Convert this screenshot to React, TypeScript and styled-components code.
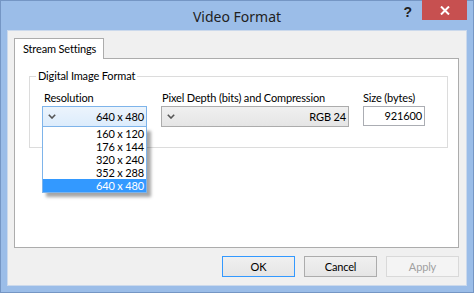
import React from 'react'
import styled, { createGlobalStyle } from 'styled-components'

const GlobalStyle = createGlobalStyle`
  html, body {
    margin: 0;
    padding: 0;
    background: #9bbde8;
  }
  body {
    font-family: Lato, "Liberation Sans", sans-serif;
    font-size: 11px;
    letter-spacing: -0.15px;
    color: #000;
  }
`

const resolutions = ['160 x 120', '176 x 144', '320 x 240', '352 x 288', '640 x 480']
const selected = '640 x 480'

export default function App() {
  return (
    <>
      <GlobalStyle />
      <Window>
        <TitleBar>
          <Title>Video Format</Title>
          <HelpButton>?</HelpButton>
          <CloseButton>
            <svg width="10" height="9" viewBox="0 0 10 9">
              <path d="M1 0.5 L9 8.5 M9 0.5 L1 8.5" stroke="#fff" strokeWidth="2" />
            </svg>
          </CloseButton>
        </TitleBar>
        <Client>
          <TabStrip>
            <Tab>Stream Settings</Tab>
          </TabStrip>
          <TabPanel>
            <Group>
              <Legend>Digital Image Format</Legend>
              <FieldRow>
                <Field $width={105}>
                  <Label $indent={2}>Resolution</Label>
                  <Combo $open>
                    <Chevron />
                    <ComboValue>640 x 480</ComboValue>
                  </Combo>
                  <DropList>
                    {resolutions.map((r) => (
                      <DropItem key={r} $selected={r === selected}>
                        {r}
                      </DropItem>
                    ))}
                  </DropList>
                </Field>
                <Field $width={188}>
                  <Label $indent={1}>Pixel Depth (bits) and Compression</Label>
                  <Combo>
                    <Chevron />
                    <ComboValue>RGB 24</ComboValue>
                  </Combo>
                </Field>
                <Field $width={62}>
                  <Label $indent={0}>Size (bytes)</Label>
                  <TextBox>921600</TextBox>
                </Field>
              </FieldRow>
            </Group>
          </TabPanel>
          <ButtonRow>
            <Button $default>OK</Button>
            <Button>Cancel</Button>
            <Button $disabled>Apply</Button>
          </ButtonRow>
        </Client>
      </Window>
    </>
  )
}

function Chevron() {
  return (
    <ChevronIcon width="8" height="5" viewBox="0 0 8 5">
      <path d="M0.8 0.8 L4 4 L7.2 0.8" fill="none" stroke="#555" strokeWidth="1.6" />
    </ChevronIcon>
  )
}

const Window = styled.div`
  width: 474px;
  height: 293px;
  box-sizing: border-box;
  border: 1px solid #7596c4;
  background: #9bbde8;
  padding: 0 6px 6px 6px;
  display: flex;
  flex-direction: column;
`

const TitleBar = styled.div`
  height: 29px;
  position: relative;
  display: flex;
  align-items: flex-start;
  justify-content: flex-end;
`

const Title = styled.div`
  position: absolute;
  left: 0;
  right: 0;
  top: 6px;
  text-align: center;
  font-family: "Noto Sans", sans-serif;
  font-size: 14px;
  letter-spacing: 0;
  color: #222;
`

const HelpButton = styled.div`
  margin: 3px 10px 0 0;
  font-family: "Liberation Sans", sans-serif;
  font-weight: bold;
  font-size: 14px;
  color: #222;
  position: relative;
`

const CloseButton = styled.div`
  width: 45px;
  height: 20px;
  margin-top: -1px;
  background: #c75050;
  display: flex;
  align-items: center;
  justify-content: center;
  position: relative;
`

const Client = styled.div`
  flex: 1;
  border: 1px solid #cbd9ec;
  background: #f0f0f0;
  padding: 7px 7px 7px 6px;
  display: flex;
  flex-direction: column;
`

const TabStrip = styled.div`
  display: flex;
  height: 20px;
`

const Tab = styled.div`
  width: 90px;
  height: 21px;
  box-sizing: border-box;
  border: 1px solid #acacac;
  border-bottom: none;
  background: #fff;
  padding: 3px 0 0 8px;
  white-space: nowrap;
  position: relative;
  z-index: 1;
`

const TabPanel = styled.div`
  height: 190px;
  box-sizing: border-box;
  border: 1px solid #acacac;
  background: #fff;
  padding: 17px 10px 0 14px;
`

const Group = styled.div`
  position: relative;
  height: 72px;
  box-sizing: border-box;
  border: 1px solid #dcdcdc;
  padding: 15px 0 0 12px;
`

const Legend = styled.span`
  position: absolute;
  left: 6px;
  top: -8px;
  padding: 0 2px;
  background: #fff;
  line-height: 14px;
`

const FieldRow = styled.div`
  display: flex;
  gap: 14px;
`

const Field = styled.div<{ $width: number }>`
  width: ${(p) => p.$width}px;
  position: relative;
  display: flex;
  flex-direction: column;
`

const Label = styled.div<{ $indent: number }>`
  height: 14px;
  line-height: 14px;
  padding-left: ${(p) => p.$indent}px;
  white-space: nowrap;
  margin-top: -1px;
  margin-bottom: 1px;
`

const Combo = styled.div<{ $open?: boolean }>`
  height: 21px;
  box-sizing: border-box;
  border: 1px solid ${(p) => (p.$open ? '#7eb4ea' : '#acacac')};
  background: ${(p) =>
    p.$open ? 'linear-gradient(#ecf4fc, #dcecfc)' : 'linear-gradient(#f0f0f0, #e5e5e5)'};
  display: flex;
  align-items: center;
  padding: 0 2px 0 5px;
`

const ChevronIcon = styled.svg`
  flex: none;
`

const ComboValue = styled.div`
  flex: 1;
  text-align: right;
`

const DropList = styled.div`
  position: absolute;
  left: 0;
  top: 35px;
  width: 105px;
  box-sizing: border-box;
  border: 1px solid #7eb4ea;
  border-top: none;
  background: #fff;
  box-shadow: 4px 4px 3px rgba(0, 0, 0, 0.35);
  z-index: 5;
`

const DropItem = styled.div<{ $selected?: boolean }>`
  height: 13px;
  line-height: 13px;
  text-align: right;
  padding-right: 2px;
  background: ${(p) => (p.$selected ? '#3399ff' : 'transparent')};
  color: ${(p) => (p.$selected ? '#fff' : '#000')};
`

const TextBox = styled.div`
  height: 20px;
  box-sizing: border-box;
  border: 1px solid #abadb3;
  background: #fff;
  text-align: right;
  line-height: 18px;
  padding-right: 2px;
`

const ButtonRow = styled.div`
  display: flex;
  justify-content: flex-end;
  gap: 9px;
  margin-top: 8px;
`

const Button = styled.div<{ $default?: boolean; $disabled?: boolean }>`
  width: 73px;
  height: 21px;
  box-sizing: border-box;
  display: flex;
  align-items: center;
  justify-content: center;
  border: 1px solid ${(p) => (p.$default ? '#3399ff' : p.$disabled ? '#d9d9d9' : '#acacac')};
  background: ${(p) => (p.$disabled ? '#f4f4f4' : 'linear-gradient(#f0f0f0, #e5e5e5)')};
  color: ${(p) => (p.$disabled ? '#a0a0a0' : '#000')};
`
